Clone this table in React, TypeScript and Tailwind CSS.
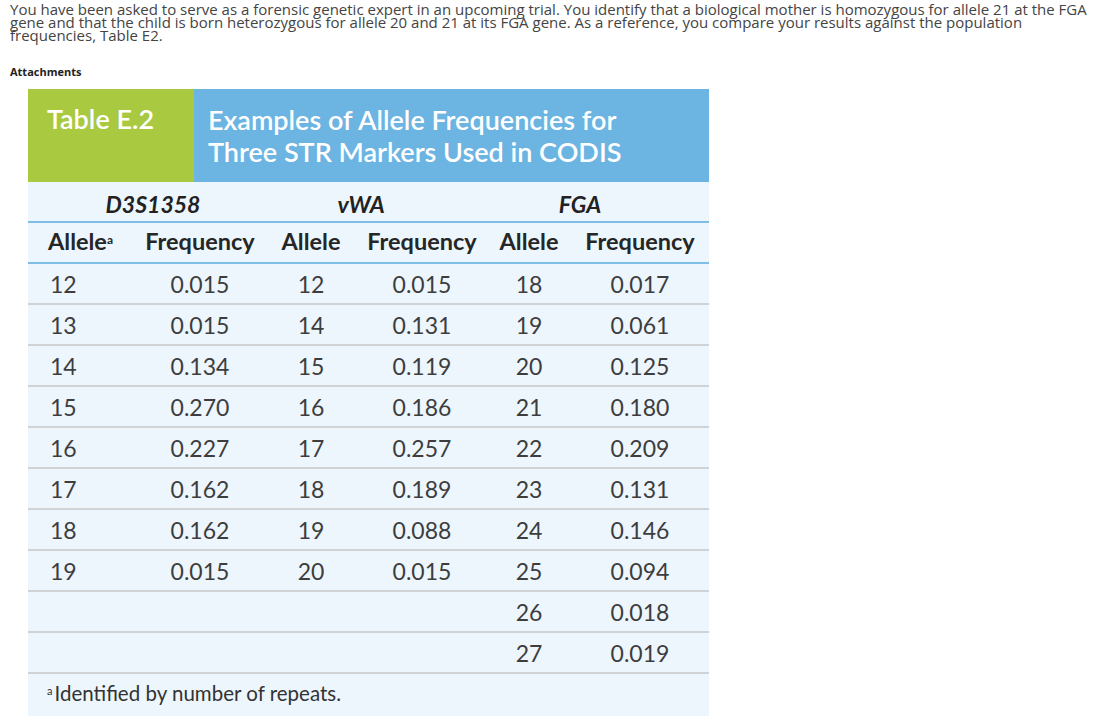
const groups = [
  { name: "D3S1358", cls: "col-span-2 pl-[18px]" },
  { name: "vWA", cls: "col-span-2 pr-[20px]" },
  { name: "FGA", cls: "col-span-2 pr-[26px]" },
]

const rows: string[][] = [
  ["12", "0.015", "12", "0.015", "18", "0.017"],
  ["13", "0.015", "14", "0.131", "19", "0.061"],
  ["14", "0.134", "15", "0.119", "20", "0.125"],
  ["15", "0.270", "16", "0.186", "21", "0.180"],
  ["16", "0.227", "17", "0.257", "22", "0.209"],
  ["17", "0.162", "18", "0.189", "23", "0.131"],
  ["18", "0.162", "19", "0.088", "24", "0.146"],
  ["19", "0.015", "20", "0.015", "25", "0.094"],
  ["", "", "", "", "26", "0.018"],
  ["", "", "", "", "27", "0.019"],
]

const cols = "grid grid-cols-[112px_120px_102px_120px_94px_128px]"

function AlleleTable() {
  return (
    <div className="w-[681px] bg-[#edf6fd] font-['Lato',sans-serif]">
      <div className="flex h-[93px]">
        <div className="w-[166px] bg-[#a8c940] pl-[19px] pt-[14px] text-[27px] font-semibold text-white leading-[32px]">
          Table E.2
        </div>
        <div className="flex-1 bg-[#6cb4e2] pl-[14px] pt-[15px] text-[27px] font-semibold text-white leading-[32px]">
          Examples of Allele Frequencies for
          <br />
          Three STR Markers Used in CODIS
        </div>
      </div>
      <div className={`${cols} h-[41px] items-center border-b-2 border-[#7dbde6] pt-[5px] text-[23px] font-bold italic text-[#222]`}>
        {groups.map(g => (
          <div key={g.name} className={`${g.cls} text-center`}>{g.name}</div>
        ))}
      </div>
      <div className={`${cols} h-[41px] items-center border-b-2 border-[#7dbde6] text-[23.5px] font-bold text-[#262626]`}>
        <div className="pl-[20px] whitespace-nowrap">Allele<sup className="text-[12px] font-bold">a</sup></div>
        <div className="text-center">Frequency</div>
        <div className="text-center">Allele</div>
        <div className="text-center">Frequency</div>
        <div className="text-center">Allele</div>
        <div className="text-center">Frequency</div>
      </div>
      {rows.map((r, i) => (
        <div key={i} className={`${cols} h-[41px] items-center border-b-2 border-[#cfd3d6] pt-[2px] text-[23px] text-[#3d3d3d]`}>
          <div className="pl-[22px]">{r[0]}</div>
          {r.slice(1).map((v, j) => (
            <div key={j} className="text-center">{v}</div>
          ))}
        </div>
      ))}
      <div className="h-[44px] pl-[19px] pt-[4px] text-[20.5px] text-[#333]">
        <sup className="text-[11px] mr-[2px]">a</sup>Identified by number of repeats.
      </div>
    </div>
  )
}

export default function App() {
  return (
    <div className="h-[716px] overflow-hidden bg-white font-['Open_Sans',sans-serif]">
      <div className="pl-[10px] pt-[3px] text-[15px] leading-[13px] text-[#444] whitespace-nowrap">
        You have been asked to serve as a forensic genetic expert in an upcoming trial. You identify that a biological mother is homozygous for allele 21 at the FGA
        <br />
        gene and that the child is born heterozygous for allele 20 and 21 at its FGA gene. As a reference, you compare your results against the population
        <br />
        frequencies, Table E2.
      </div>
      <div className="pl-[10px] pt-[22px] text-[11px] font-bold text-[#222]">Attachments</div>
      <div className="pl-[28px] pt-[8px]">
        <AlleleTable />
      </div>
    </div>
  )
}
